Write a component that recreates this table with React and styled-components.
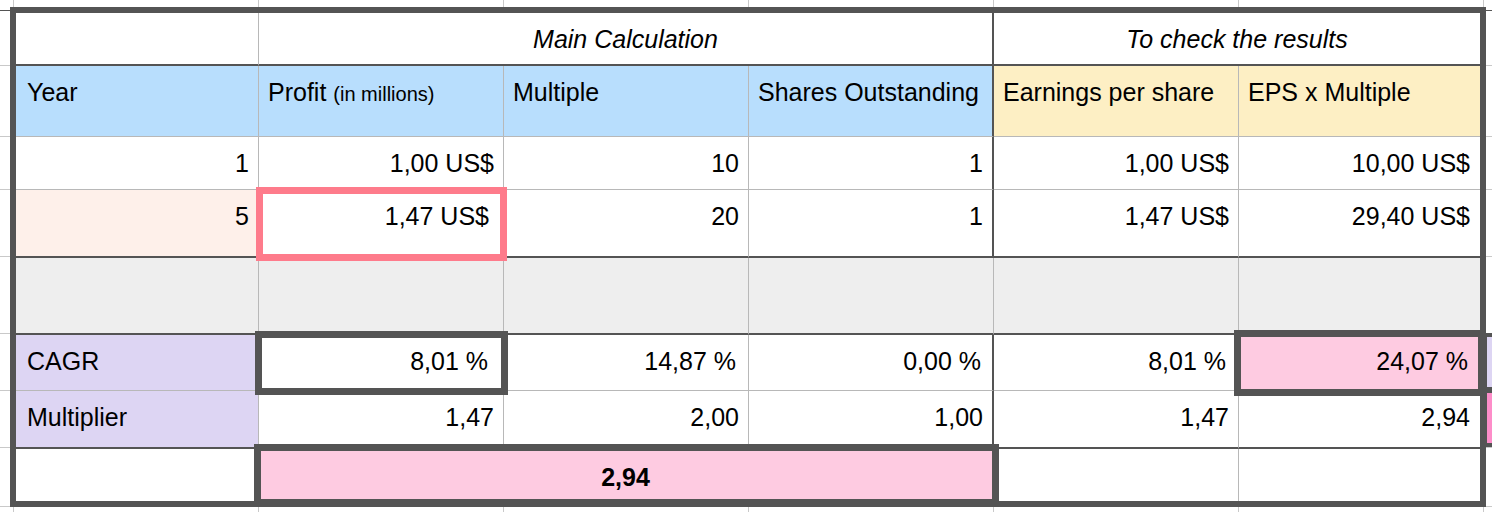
import React from 'react';
import styled, { createGlobalStyle, css } from 'styled-components';

const LIGHT = '#b8b8b8';
const DARK = '#545454';
const BLUE = '#b8defd';
const YELLOW = '#fdefc4';
const PEACH = '#fef0ea';
const GRAY = '#eeeeee';
const PURPLE = '#ddd5f3';
const PINK = '#fecbe1';
const HOT_PINK = '#fd8dc9';
const RED_RING = '#fe7b8b';

const Global = createGlobalStyle`
  html, body { margin: 0; padding: 0; background: #fff; overflow: hidden; }
  body { font-family: "Liberation Sans", Arial, Helvetica, sans-serif; color: #000; }
`;

const vLines = [13, 258, 503, 748, 993, 1238, 1483];
const hLines = [65, 136, 189, 256, 333, 390, 447, 506];
const sheetBg = [
  `linear-gradient(${DARK}, ${DARK}) 0 10px / 10px 1px no-repeat`,
  `linear-gradient(${DARK}, ${DARK}) 1486px 10px / 6px 1px no-repeat`,
  ...vLines.map((x) => `linear-gradient(#c9c9c9, #c9c9c9) ${x}px 0 / 1px 100% no-repeat`),
  ...hLines.map((y) => `linear-gradient(#c9c9c9, #c9c9c9) 0 ${y}px / 100% 1px no-repeat`),
].join(', ');

const Sheet = styled.div`
  box-sizing: border-box;
  width: 1492px;
  height: 512px;
  overflow: hidden;
  padding: 7px 0 0 10px;
  display: flex;
  align-items: flex-start;
  background: ${sheetBg};
  background-color: #fff;
`;

const Table = styled.div`
  box-sizing: border-box;
  flex: none;
  width: 1476px;
  height: 500px;
  border: 6px solid ${DARK};
  background: #fff;
  display: grid;
  grid-template-columns: 243px 245px 245px 245px 245px 241px;
  grid-template-rows: 53px 71px 53px 68px 77px 56px 58px 52px;
  font-size: 25px;
  line-height: 28px;
`;

const NextTable = styled.div`
  flex: none;
  margin-top: 326px;
  width: 12px;
  background: ${DARK};
  padding: 4px 0 4px 1px;
  display: flex;
  flex-direction: column;
  gap: 6px;
`;

const NextCell = styled.div`
  height: ${(p) => p.$h}px;
  background: ${(p) => p.$bg};
`;

const line = (kind) =>
  kind === 'dark' ? `2px solid ${DARK}` : kind === 'light' ? `1px solid ${LIGHT}` : 'none';

const Cell = styled.div`
  box-sizing: border-box;
  min-width: 0;
  white-space: nowrap;
  overflow: visible;
  background: ${(p) => p.$bg || '#fff'};
  border-right: ${(p) => line(p.$r)};
  border-bottom: ${(p) => line(p.$b)};
  padding: 12px ${(p) => p.$pr ?? 9}px 0 ${(p) => p.$pl ?? 9}px;
  ${(p) => p.$span && css`grid-column: span ${p.$span};`}
  ${(p) =>
    p.$ring &&
    css`
      position: relative;
      z-index: 1;
      outline: 7px solid ${p.$ring};
      outline-offset: -${p.$ringOffset ?? 3}px;
    `}
`;

const TitleCell = styled(Cell)`
  font-style: italic;
  text-align: center;
`;

const HeadCell = styled(Cell)`
  text-align: left;
`;

const LabelCell = styled(Cell)`
  text-align: left;
  padding-left: 11px;
`;

const NumCell = styled(Cell)`
  text-align: right;
`;

const TotalCell = styled(Cell)`
  text-align: center;
  font-weight: 700;
  padding-top: 14px;
`;

const Small = styled.span`
  font-size: 20px;
`;

export default function App() {
  return (
    <>
      <Global />
      <Sheet>
        <Table>
          {/* title row */}
          <Cell $r="light" $b="dark" />
          <TitleCell $span={3} $r="dark" $b="dark">Main Calculation</TitleCell>
          <TitleCell $span={2} $b="dark">To check the results</TitleCell>

          {/* header row */}
          <LabelCell $bg={BLUE} $r="light" $b="light" $pl={12}>Year</LabelCell>
          <HeadCell $bg={BLUE} $r="light" $b="light">
            Profit <Small>(in millions)</Small>
          </HeadCell>
          <HeadCell $bg={BLUE} $r="light" $b="light">Multiple</HeadCell>
          <HeadCell $bg={BLUE} $r="dark" $b="light">Shares Outstanding</HeadCell>
          <HeadCell $bg={YELLOW} $r="light" $b="light">Earnings per share</HeadCell>
          <HeadCell $bg={YELLOW} $b="light">EPS x Multiple</HeadCell>

          {/* year 1 */}
          <NumCell $r="light" $b="light">1</NumCell>
          <NumCell $r="light" $b="light">1,00 US$</NumCell>
          <NumCell $r="light" $b="light">10</NumCell>
          <NumCell $r="dark" $b="light">1</NumCell>
          <NumCell $r="light" $b="light">1,00 US$</NumCell>
          <NumCell $b="light" $pr={10}>10,00 US$</NumCell>

          {/* year 5 */}
          <NumCell $bg={PEACH} $r="light" $b="dark">5</NumCell>
          <NumCell $r="light" $b="dark" $pr={14} $ring={RED_RING} $ringOffset={4}>1,47 US$</NumCell>
          <NumCell $r="light" $b="dark">20</NumCell>
          <NumCell $r="dark" $b="dark">1</NumCell>
          <NumCell $r="light" $b="dark">1,47 US$</NumCell>
          <NumCell $b="dark" $pr={10}>29,40 US$</NumCell>

          {/* spacer row */}
          <Cell $bg={GRAY} $r="light" $b="dark" />
          <Cell $bg={GRAY} $r="light" $b="dark" />
          <Cell $bg={GRAY} $r="light" $b="dark" />
          <Cell $bg={GRAY} $r="light" $b="dark" />
          <Cell $bg={GRAY} $r="light" $b="dark" />
          <Cell $bg={GRAY} $b="dark" />

          {/* CAGR */}
          <LabelCell $bg={PURPLE} $r="light" $b="light">CAGR</LabelCell>
          <NumCell $r="light" $b="light" $pr={15} $ring={DARK}>8,01 %</NumCell>
          <NumCell $r="light" $b="light" $pr={12}>14,87 %</NumCell>
          <NumCell $r="dark" $b="light" $pr={11}>0,00 %</NumCell>
          <NumCell $r="light" $b="light" $pr={12}>8,01 %</NumCell>
          <NumCell $bg={PINK} $b="light" $pr={12} $ring={DARK} $ringOffset={2}>24,07 %</NumCell>

          {/* Multiplier */}
          <LabelCell $bg={PURPLE} $r="light" $b="dark">Multiplier</LabelCell>
          <NumCell $r="light" $b="dark">1,47</NumCell>
          <NumCell $r="light" $b="dark">2,00</NumCell>
          <NumCell $r="dark" $b="dark">1,00</NumCell>
          <NumCell $r="light" $b="dark">1,47</NumCell>
          <NumCell $b="dark" $pr={10}>2,94</NumCell>

          {/* total */}
          <Cell $r="light" />
          <TotalCell $span={3} $r="dark" $bg={PINK} $ring={DARK} $ringOffset={2}>2,94</TotalCell>
          <Cell $r="light" />
          <Cell />
        </Table>
        <NextTable>
          <NextCell $h={50} $bg={PURPLE} />
          <NextCell $h={50} $bg={HOT_PINK} />
        </NextTable>
      </Sheet>
    </>
  );
}
